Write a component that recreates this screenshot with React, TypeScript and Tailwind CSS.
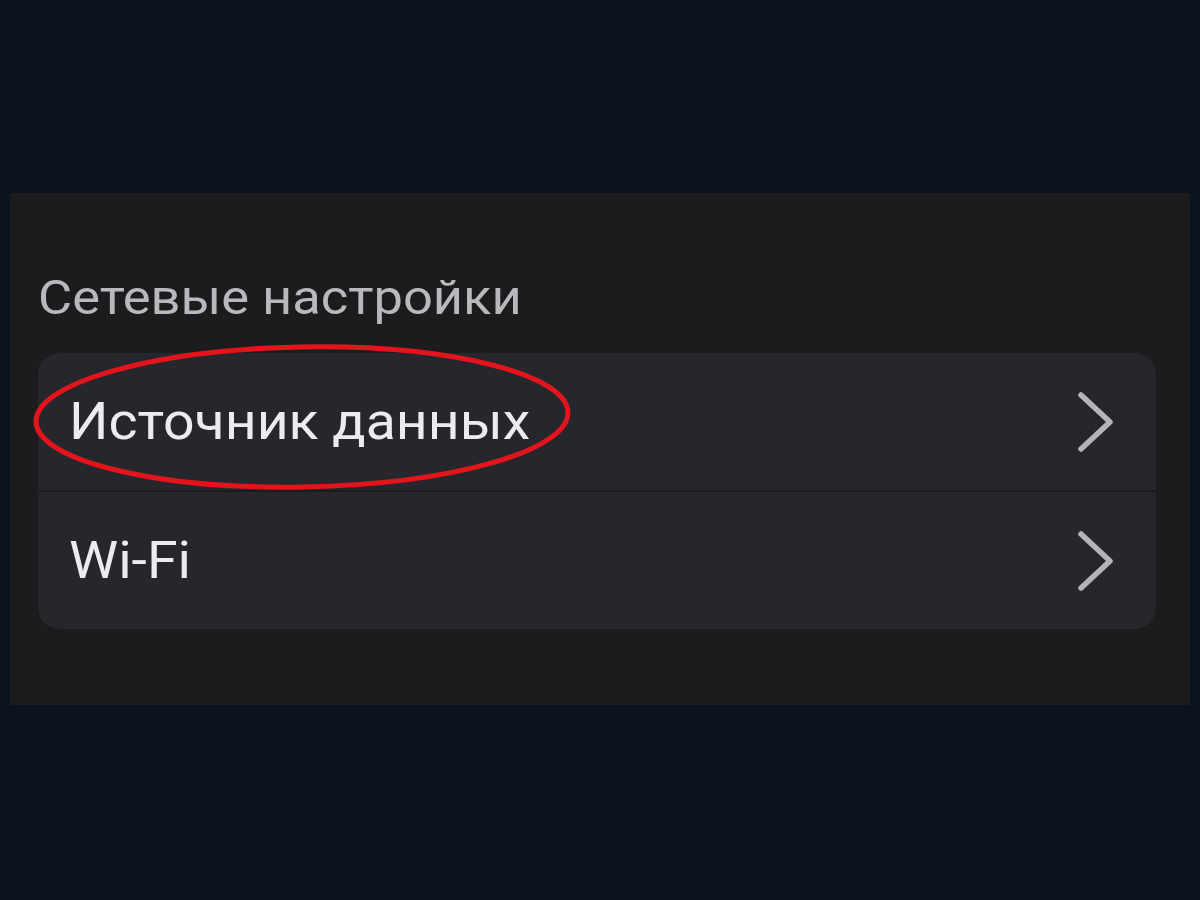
import React from "react";

function Chevron() {
  return (
    <svg width="40" height="64" viewBox="0 0 40 64" fill="none" className="shrink-0">
      <polyline points="5,5 34,32 5,59" stroke="#b3b3ba" strokeWidth="5.5" strokeLinecap="round" strokeLinejoin="round" />
    </svg>
  );
}

function Row({ label, children }: { label: string; children?: React.ReactNode }) {
  return (
    <div className="relative flex h-[137px] items-center justify-between pl-[31px] pr-[40px]">
      {children}
      <span className="inline-block origin-left scale-x-[1.065] text-[52px] leading-none text-[#ececee]">{label}</span>
      <Chevron />
    </div>
  );
}

export default function App() {
  return (
    <div
      className="min-h-[900px] w-full bg-[#0b1220] pt-[193px]"
      style={{ fontFamily: "Roboto, 'Noto Sans', sans-serif" }}
    >
      <div className="ml-[10px] h-[512px] w-[1180px] bg-[#1c1c1f] pl-[28px] pr-[34px] pt-[80px]">
        <div className="inline-block origin-left scale-x-[1.07] text-[49px] leading-[50px] text-[#b9b9bd]">Сетевые настройки</div>
        <div className="mt-[30px] overflow-visible rounded-[22px] bg-[#26262d]">
          <Row label="Источник данных">
            <svg
              className="pointer-events-none absolute left-[-6px] top-[-10px] overflow-visible"
              width="540"
              height="150"
              viewBox="0 0 540 150"
              fill="none"
            >
              <ellipse cx="270" cy="74" rx="266" ry="70" stroke="#e3141c" strokeWidth="5" transform="rotate(-1 270 74)" />
            </svg>
          </Row>
          <div className="h-[2px] bg-[#1c1c1f]" />
          <Row label="Wi-Fi" />
        </div>
      </div>
    </div>
  );
}
